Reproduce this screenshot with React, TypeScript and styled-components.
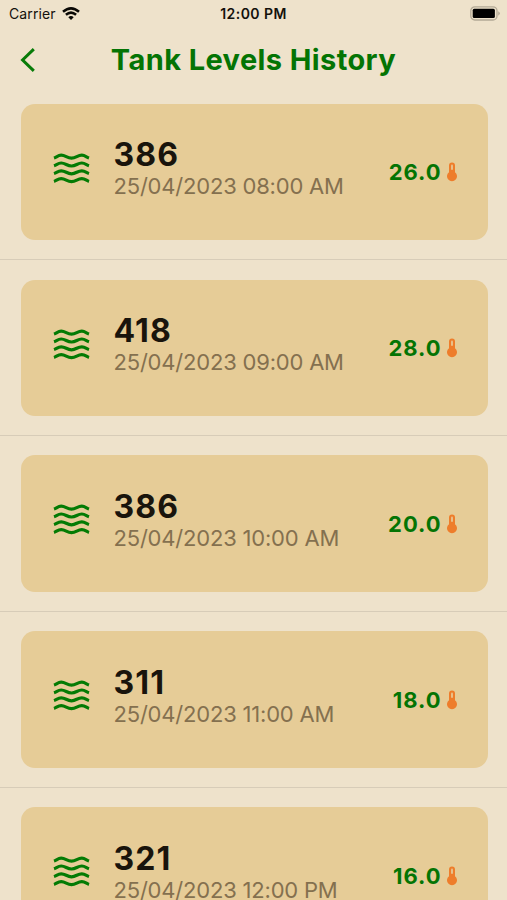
import React from "react";
import styled, { createGlobalStyle } from "styled-components";

const GlobalStyle = createGlobalStyle`
  *, *::before, *::after { box-sizing: border-box; }
  html, body { margin: 0; background: #eee2cb; }
  body { overflow: hidden; font-family: Inter, "Liberation Sans", sans-serif; }
`;

const Screen = styled.main`
  height: 900px;
  overflow: hidden;
  display: flex;
  flex-direction: column;
  background: #eee2cb;
`;

const StatusBar = styled.div`
  height: 27px;
  flex: none;
  display: grid;
  grid-template-columns: 1fr auto 1fr;
  align-items: center;
  padding: 0 7px 0 9px;
  color: #14110c;
  font-size: 14px;
  line-height: 27px;
`;

const Carrier = styled.div`
  display: flex;
  align-items: center;
  gap: 6px;
  letter-spacing: 0.1px;
`;

const Clock = styled.div`
  font-weight: 600;
  letter-spacing: 0.45px;
  transform: translateX(-1px);
`;

const BatteryIcon = styled.svg`
  justify-self: end;
`;

const Header = styled.header`
  height: 66px;
  flex: none;
  display: grid;
  grid-template-columns: 48px 1fr 48px;
  align-items: center;
`;

const BackButton = styled.button`
  display: flex;
  padding: 0 0 0 19px;
  border: 0;
  background: none;
`;

const Title = styled.h1`
  margin: 0;
  text-align: center;
  color: #047404;
  font-size: 29px;
  font-weight: 700;
  line-height: 36px;
  letter-spacing: 0.4px;
`;

const List = styled.ul`
  margin: 0;
  padding: 0;
  list-style: none;
`;

const Row = styled.li`
  height: 175.95px;
  padding: 10.6px 19.5px 0 20.5px;
  display: flex;
  flex-direction: column;
  gap: 18.8px;
`;

const Card = styled.article`
  height: 136.7px;
  flex: none;
  display: flex;
  padding: 0 30px 0 32.5px;
  border-radius: 14px;
  background: #e6cc97;
`;

const Divider = styled.div`
  height: 1px;
  flex: none;
  margin: 0 -19.5px 0 -20.5px;
  background: #d7ccb8;
`;

const WavesIcon = styled.svg`
  flex: none;
  margin: 48px 23.5px 0 0;
`;

const Details = styled.div`
  flex: 1;
  padding-top: 32.6px;
`;

const Level = styled.div`
  color: #19140c;
  font-size: 32px;
  font-weight: 700;
  line-height: 38px;
  letter-spacing: 1.1px;
`;

const Timestamp = styled.time`
  display: block;
  margin-top: -1px;
  color: #84704f;
  font-size: 22px;
  line-height: 26px;
  letter-spacing: -0.2px;
  white-space: nowrap;
`;

const Temperature = styled.div`
  height: 30px;
  margin-top: 53.8px;
  display: flex;
  align-items: center;
  gap: 4px;
  color: #047404;
  font-size: 22px;
  font-weight: 700;
  letter-spacing: 0.95px;
`;

const readings = [
  { level: "386", time: "25/04/2023 08:00 AM", temp: "26.0" },
  { level: "418", time: "25/04/2023 09:00 AM", temp: "28.0" },
  { level: "386", time: "25/04/2023 10:00 AM", temp: "20.0" },
  { level: "311", time: "25/04/2023 11:00 AM", temp: "18.0" },
  { level: "321", time: "25/04/2023 12:00 PM", temp: "16.0" },
];

const Wifi = () => (
  <svg width="18" height="14" viewBox="0 0 18 14" fill="none" stroke="#090805" strokeWidth="2.5">
    <path d="M1 4.8Q9-2.1 17 4.8M3.9 7.8Q9 3.4 14.1 7.8" />
    <path d="M6.3 10.2Q9 8 11.7 10.2L9 13Z" fill="#090805" stroke="none" />
  </svg>
);

const Battery = () => (
  <BatteryIcon width="30" height="15" viewBox="0 0 30 15">
    <rect x=".8" y=".8" width="26.2" height="13.2" rx="4" fill="none" stroke="#b3a996" strokeWidth="1.3" />
    <rect x="2.7" y="2.7" width="22.2" height="9.4" rx="1.5" fill="#000" />
    <path d="M28.3 5.3Q31.2 7.5 28.3 9.7Z" fill="#aaa08e" />
  </BatteryIcon>
);

const Waves = () => (
  <WavesIcon width="37" height="34" viewBox="0 0 37 34" fill="none" stroke="#047b04" strokeWidth="3.2">
    {[4.7, 12.5, 20.3, 28.1].map((y) => (
      <path
        key={y}
        d={`M1 ${y + 1.3}C3.5 ${y + 0.5} 5 ${y - 1.5} 8.2 ${y - 1.5}C12.5 ${y - 1.5} 14 ${y + 1.5} 18.5 ${y + 1.5}C23 ${y + 1.5} 24.5 ${y - 1.5} 28.8 ${y - 1.5}C32 ${y - 1.5} 33.5 ${y + 0.5} 36 ${y + 1.3}`}
      />
    ))}
  </WavesIcon>
);

const Thermometer = () => (
  <svg width="12" height="20" viewBox="0 0 12 20">
    <path d="M3 3.6a3 3 0 0 1 6 0V10.2a5 5 0 1 1-6 0Z" fill="#ee7d2b" />
    <path d="M6 3.6V7" stroke="#e8c08a" strokeWidth="2" strokeLinecap="round" />
  </svg>
);

export default function App() {
  return (
    <>
      <GlobalStyle />
      <Screen>
        <StatusBar>
          <Carrier>Carrier<Wifi /></Carrier>
          <Clock>12:00 PM</Clock>
          <Battery />
        </StatusBar>
        <Header>
          <BackButton aria-label="Back">
            <svg width="16" height="26" viewBox="0 0 16 26" fill="none" stroke="#087b08" strokeWidth="3">
              <path d="M14.8 2.2 3.6 13 14.8 23.8" />
            </svg>
          </BackButton>
          <Title>Tank Levels History</Title>
        </Header>
        <List>
          {readings.map((r) => (
            <Row key={r.time}>
              <Card>
                <Waves />
                <Details>
                  <Level>{r.level}</Level>
                  <Timestamp>{r.time}</Timestamp>
                </Details>
                <Temperature>{r.temp}<Thermometer /></Temperature>
              </Card>
              <Divider />
            </Row>
          ))}
        </List>
      </Screen>
    </>
  );
}
